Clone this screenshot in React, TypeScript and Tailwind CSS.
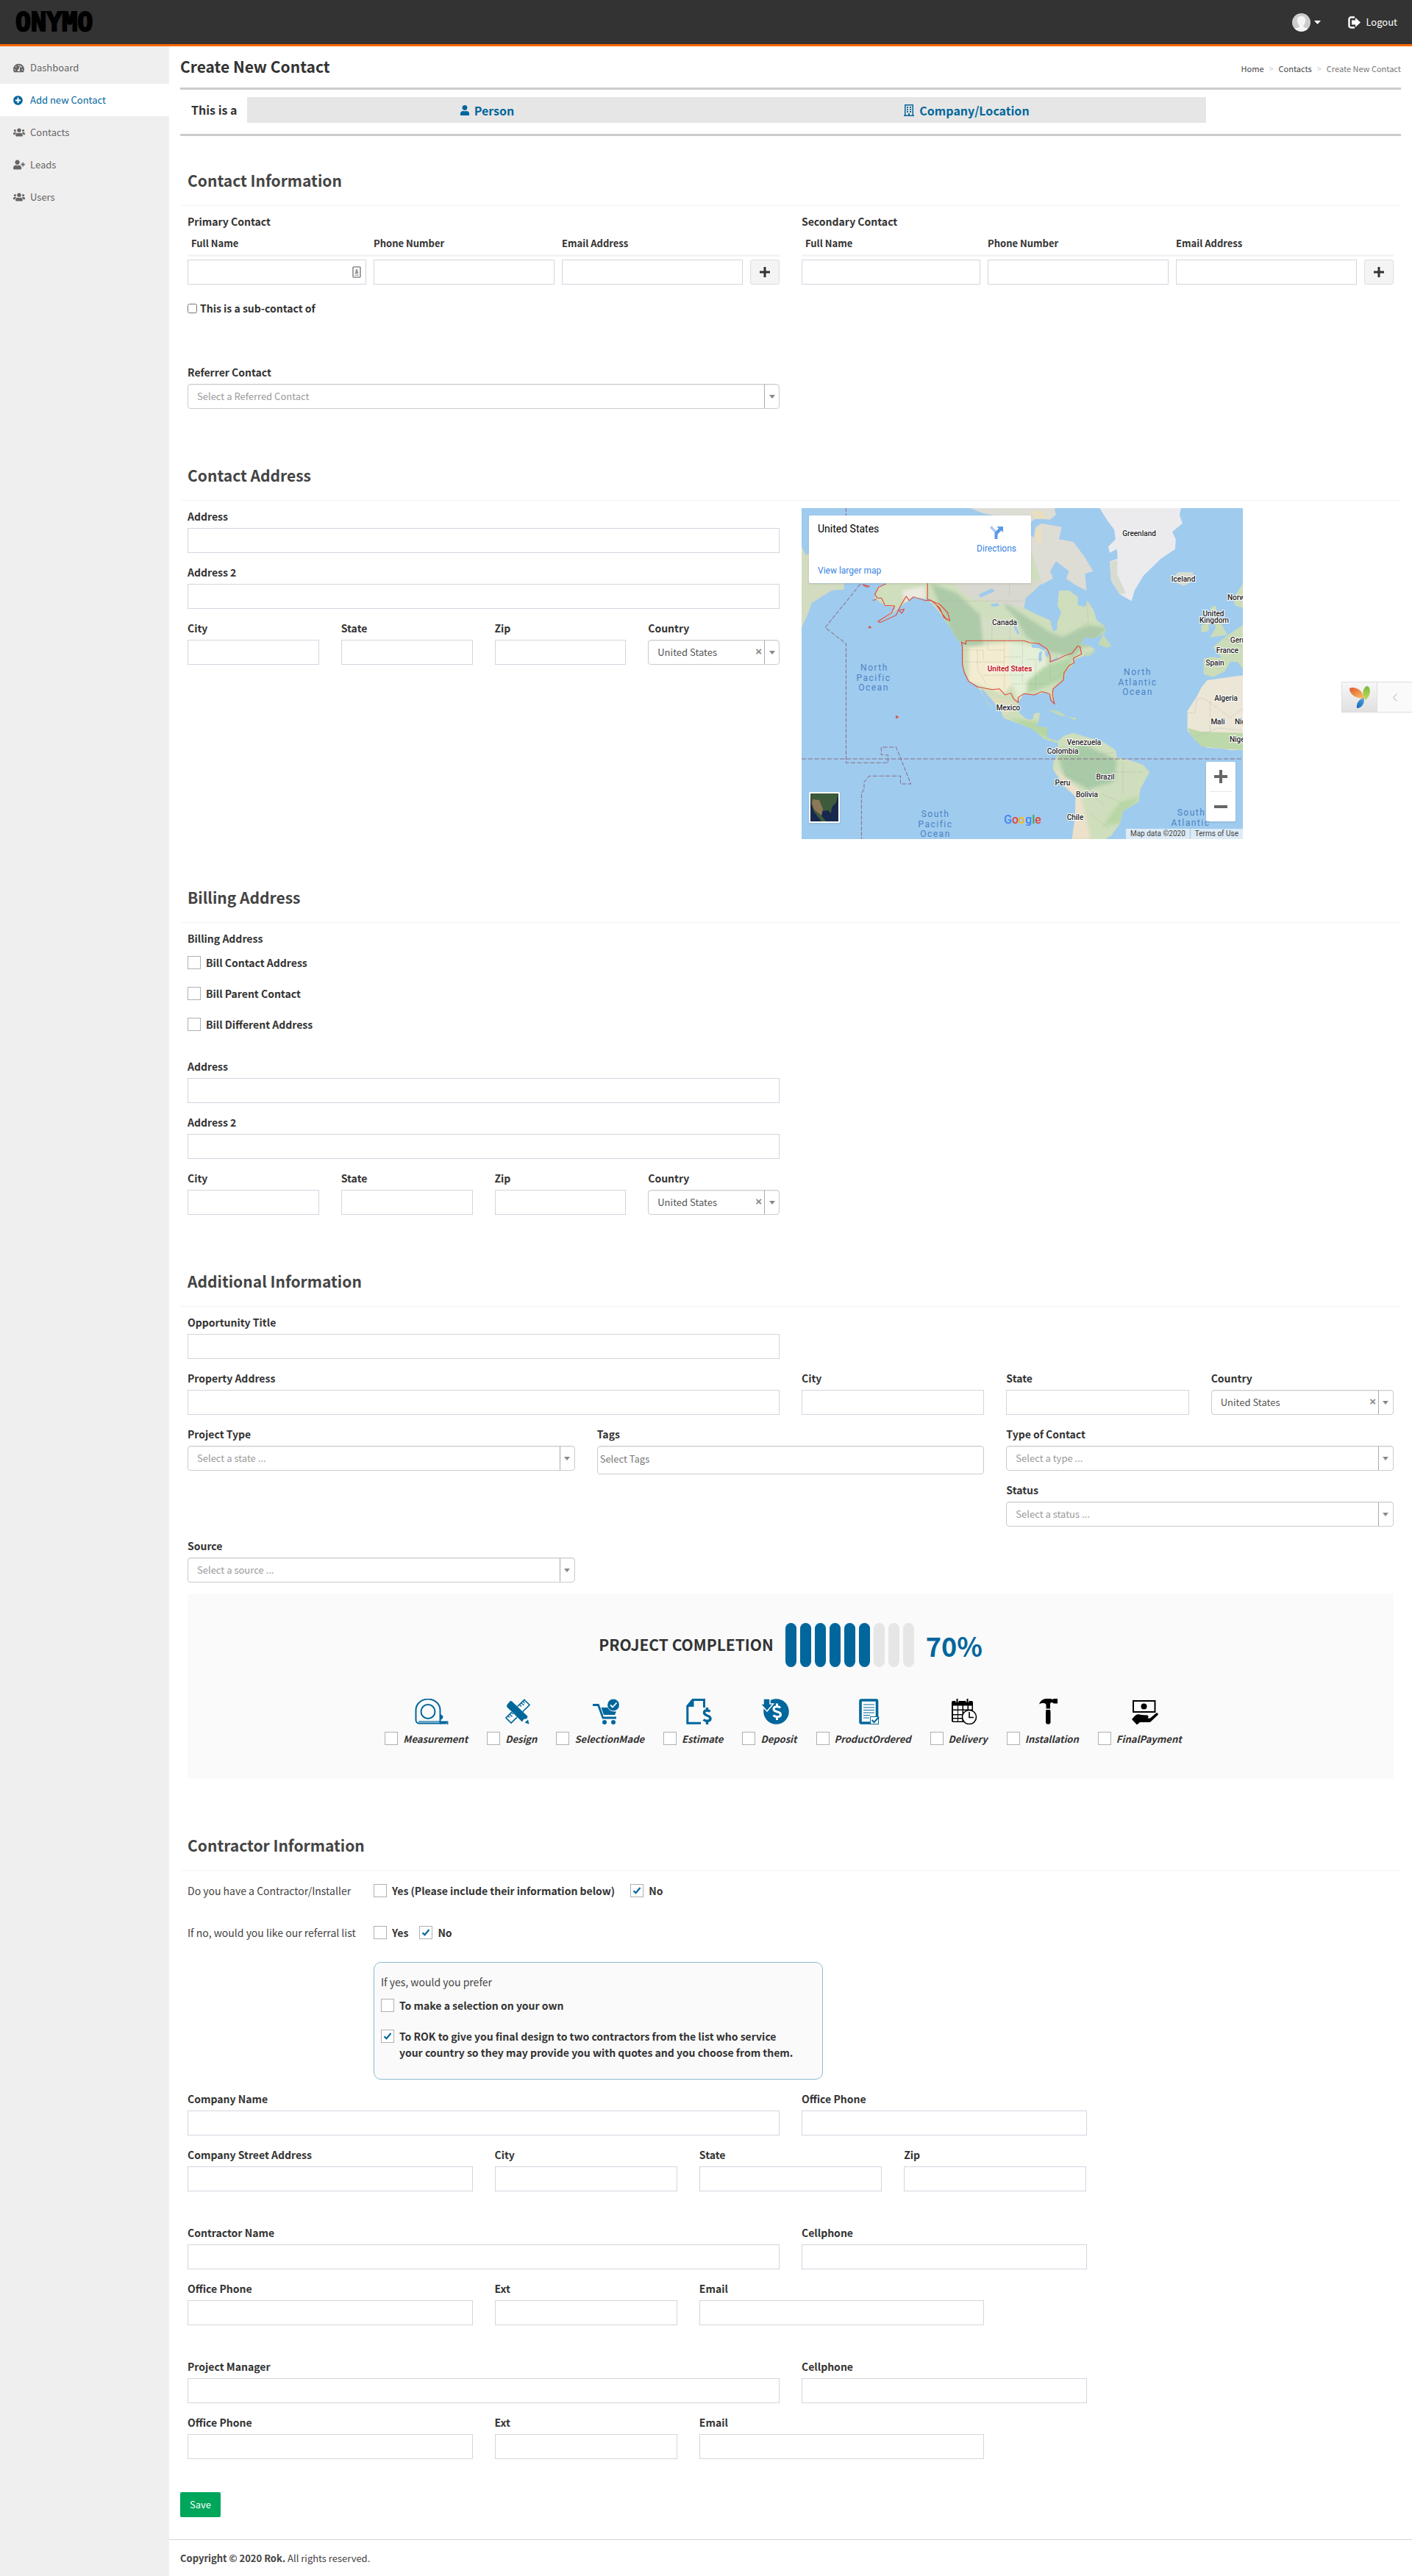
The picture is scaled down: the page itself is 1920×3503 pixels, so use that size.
import { useId, type ReactNode } from "react";
import { FaPlusCircle, FaRegBuilding, FaTachometerAlt, FaUser, FaUserPlus, FaUsers } from "react-icons/fa";

const labelClass = "block text-sm leading-[22px] font-bold text-[#333]";
const inputClass = "block h-[34px] w-full border border-[#d2d6de] bg-white px-3 text-[13px] text-[#555] outline-none";

function Row({ children, className = "" }: { children: ReactNode; className?: string }) {
  return <div className={`grid grid-cols-12 gap-x-[30px] ${className}`}>{children}</div>;
}

function Field({ label, className = "" }: { label: string; className?: string }) {
  const id = useId();
  return (
    <div className={`pb-[15px] ${className}`}>
      <label htmlFor={id} className={`${labelClass} mb-[5px]`}>{label}</label>
      <input id={id} type="text" className={inputClass} />
    </div>
  );
}

function SelectField({ label, value, filled = false, className = "" }: { label: string; value: string; filled?: boolean; className?: string }) {
  const id = useId();
  return (
    <div className={`pb-[15px] ${className}`}>
      <label htmlFor={id} className={`${labelClass} mb-[5px]`}>{label}</label>
      <div className="relative">
        <select
          id={id}
          className={`block h-[34px] w-full appearance-none rounded border border-[#ccc] bg-white pl-3 pr-10 text-[13px] leading-5 shadow-[inset_0_1px_1px_rgba(0,0,0,0.075)] outline-none ${filled ? "text-[#555]" : "text-[#999]"}`}
        >
          <option>{value}</option>
        </select>
        {filled && (
          <button type="button" aria-label={`Clear ${label}`} className="absolute right-[24px] top-[6px] font-['Liberation_Sans',sans-serif] text-[15px] leading-5 font-bold text-[#888]">×</button>
        )}
        <span className="pointer-events-none absolute inset-y-px right-px flex w-5 items-center justify-center border-l border-[#aaa]">
          <svg width="8" height="5" viewBox="0 0 8 5" fill="#888"><path d="M0 0h8L4 5z" /></svg>
        </span>
      </div>
    </div>
  );
}

function Check({ label, checked = false, className = "" }: { label: ReactNode; checked?: boolean; className?: string }) {
  return (
    <label className={`flex items-start gap-[7px] text-sm leading-[22px] font-bold text-[#333] ${className}`}>
      <span className="relative mt-[2px] block size-[18px] shrink-0">
        <input type="checkbox" defaultChecked={checked} className="peer block size-[18px] appearance-none border border-[#b0b0b0] bg-white" />
        <svg viewBox="0 0 18 18" className="pointer-events-none absolute inset-0 hidden size-[18px] peer-checked:block" fill="none" stroke="#00669c" strokeWidth="2.2">
          <path d="M4.5 9.2l3 3L13.5 5" />
        </svg>
      </span>
      <span>{label}</span>
    </label>
  );
}

function Section({ title, children, className = "" }: { title: string; children: ReactNode; className?: string }) {
  return (
    <section className={className}>
      <h2 className="flex h-[67px] items-center border-b border-[#f4f4f4] px-[10px] pb-[2px] text-[21px] font-bold text-[#444]">{title}</h2>
      <div className="px-[10px] pt-[10px] pb-[43px]">{children}</div>
    </section>
  );
}

const tableGrid = "grid grid-cols-[243fr_246fr_246fr_40px] gap-x-[10px]";

function ContactTable({ title, card = false }: { title: string; card?: boolean }) {
  const id = useId();
  const heads = ["Full Name", "Phone Number", "Email Address"];
  return (
    <fieldset className="col-span-6">
      <legend className={`${labelClass} mb-2`}>{title}</legend>
      <div className={`${tableGrid} border-b-[3px] border-[#f4f4f4]`}>
        {heads.map((h, i) => (
          <label key={h} htmlFor={`${id}-${i}`} className={`h-[26px] text-[13px] leading-[22px] font-bold text-[#333] ${i === 0 ? "pl-[5px]" : ""}`}>{h}</label>
        ))}
      </div>
      <div className={`mt-1 ${tableGrid}`}>
        {heads.map((h, i) => (
          <div key={h} className="relative">
            <input id={`${id}-${i}`} type="text" className={inputClass} />
            {card && i === 0 && (
              <svg className="absolute right-[7px] top-[9px]" width="12" height="16" viewBox="0 0 12 16" fill="none">
                <rect x="1" y="1" width="10" height="14" rx="1" fill="#fff" stroke="#8a8a8a" strokeWidth="1.6" />
                <circle cx="6" cy="5.4" r="1.3" fill="#8a8a8a" />
                <path d="M4 9c0-3 4-3 4 0zM3.4 10.5h5.2M3.4 12.4h5.2" fill="#8a8a8a" stroke="#8a8a8a" strokeWidth=".8" />
              </svg>
            )}
          </div>
        ))}
        <button type="button" aria-label={`Add ${title}`} className="flex h-[34px] items-center justify-center rounded-[3px] border border-[#ddd] bg-[#f4f4f4]">
          <svg width="14" height="14" viewBox="0 0 14 14" fill="#333"><path d="M5.5 0h3v5.5H14v3H8.500V14h-3V8.500H0v-3h5.500z" /></svg>
        </button>
      </div>
    </fieldset>
  );
}

const mapLabels: [string, number, number][] = [
  ["Greenland", 459, 38], ["Iceland", 519, 100], ["Canada", 276, 159], ["Mexico", 281, 275],
  ["Venezuela", 384, 322], ["Colombia", 355, 334], ["Brazil", 413, 369], ["Peru", 355, 377],
  ["Bolivia", 388, 393], ["Chile", 372, 424], ["Norway", 596, 125], ["United", 560, 147],
  ["Kingdom", 561, 156], ["Germany", 603, 183], ["France", 579, 197], ["Spain", 562, 214],
  ["Algeria", 577, 262], ["Mali", 566, 294], ["Niger", 601, 294], ["Nigeria", 598, 318],
];
const oceanLabels: [string, number, number][] = [
  ["North", 99, 221], ["Pacific", 98, 235], ["Ocean", 98, 248],
  ["North", 457, 227], ["Atlantic", 457, 241], ["Ocean", 457, 254],
  ["South", 182, 420], ["Pacific", 182, 434], ["Ocean", 182, 447],
  ["South", 530, 418], ["Atlantic", 529, 432], ["Ocean", 529, 445],
];

function MapDrawing() {
  return (
    <svg viewBox="0 0 600 450" className="absolute inset-0 size-full" fontFamily="Roboto, sans-serif" preserveAspectRatio="xMidYMid slice">
      <defs>
        <filter id="relief" x="-10%" y="-10%" width="120%" height="120%"><feGaussianBlur stdDeviation="6" /></filter>
        <clipPath id="land">
          <path d="M275 400L285 355 315 340 330 250 500 200 700 180 815 210 850 340 820 375 795 400 790 440 830 465 880 490 890 535 903 530 905 495 918 460 905 430 910 370 945 368 975 395 975 430 1000 435 1008 410 1030 450 1040 490 1068 515 1070 540 1030 565 1000 560 985 590 1010 590 1035 610 990 640 965 650 960 670 935 700 925 735 890 770 895 830 880 800 865 785 825 795 790 790 770 825 775 870 800 895 820 895 825 870 845 868 840 905 830 920 870 930 870 970 910 985 900 990 860 975 820 935 780 915 720 890 710 860 680 815 650 775 640 775 655 810 683 852 665 830 630 762 600 740 580 690 578 590 555 560 535 520 500 460 460 405 410 395 370 430 340 460 290 498 350 440 310 430 275 400Z" />
        </clipPath>
        <clipPath id="south">
          <path d="M905 985L930 960 960 950 1000 965 1060 985 1105 1020 1110 1050 1150 1060 1200 1080 1222 1110 1190 1180 1185 1230 1130 1270 1120 1320 1090 1370 1070 1383 955 1383 965 1300 968 1210 930 1170 890 1100 890 1070 910 1030Z" />
        </clipPath>
      </defs>
      <rect width="600" height="450" fill="#9fcbee" />
      <g transform="scale(.3953 .3333) translate(-25 -33)">
        <path fill="#d3dcc0" d="M25 190L40 225 52 215 50 340H172L170 365 130 368 100 390 60 420 45 470 25 520Z" />
        <path fill="#dddcd5" d="M605 33L650 55 815 90 830 75 880 80 900 60 895 33ZM830 110L850 95 920 110 910 160 960 170 1000 235 1028 290 1000 300 1005 370 965 345 935 320 945 290 900 250 880 290 890 320 850 345 820 320 815 200ZM760 90L870 200 830 240Z" />
        <path fill="#e9dfc0" d="M812 45L850 45 870 75 830 78ZM830 120L850 105 850 190 830 160Z" />
        <path fill="#ebebee" d="M1050 33H1330L1325 60 1335 95 1300 130 1312 160 1310 200 1260 240 1200 310 1170 370 1160 412 1120 385 1090 330 1085 250 1112 240 1110 200 1085 215 1080 190 1105 160 1100 120 1075 80Z" />
        <path fill="#d8dcd0" d="M1085 250L1112 245 1110 300 1140 380 1120 385 1090 330ZM1303 315L1320 295 1370 295 1378 325 1340 350 1310 335Z" />
        <g clipPath="url(#land)">
          <rect x="200" y="150" width="900" height="860" fill="#cfdebc" />
          <g filter="url(#relief)">
            <path fill="#adcba9" d="M470 340L560 380 640 470 650 600 560 590 500 430ZM700 400L790 470 880 540 1000 590 960 640 880 620 800 560 760 480ZM1010 510L1080 520 1010 600 900 570Z" />
            <path fill="#d9d8d0" d="M540 330L860 330 790 440 700 420 600 400Z" />
            <path fill="#d5dfc5" d="M640 480L760 490 780 560 650 570Z" />
            <path fill="#f3ecd0" d="M600 600L740 580 760 740 720 790 600 740Z" />
            <path fill="#e3efd6" d="M740 580L860 600 870 680 770 820 740 720Z" />
            <path fill="#b3d4a8" d="M860 680L960 640 930 730 800 790 800 740Z" />
            <path fill="#e1dcbc" d="M650 790L760 830 730 880Z" />
            <path fill="#eceae0" d="M370 370L450 350 450 410 380 420Z" />
            <path fill="#b5d5a2" d="M740 890L870 910 900 990 830 950Z" />
          </g>
        </g>
        <g clipPath="url(#south)">
          <rect x="880" y="940" width="360" height="450" fill="#cfdebc" />
          <g filter="url(#relief)">
            <path fill="#a9caa7" d="M900 1020L1000 1000 1110 1060 1100 1150 1010 1180 930 1130Z" />
            <path fill="#eee1cb" d="M890 1090L980 1180 1020 1383 950 1383 960 1220Z" />
            <path fill="#b9d7a6" d="M1120 1230L1190 1210 1120 1320 1060 1330Z" />
          </g>
        </g>
        <path fill="#9fcbee" d="M815 590L832 584 852 592 866 610 858 614 840 604 818 602ZM842 622L852 614 850 655 843 662 840 645ZM862 612L878 622 874 645 864 632ZM882 655L905 640 908 646 884 662ZM635 385L680 360 690 372 640 398ZM675 425L700 420 705 432 680 436ZM755 500L765 520 775 545 768 548 757 525Z" />
        <path fill="#c3d9b4" d="M1045 590L1062 545 1075 570 1092 595 1075 602ZM870 855L905 860 935 880 920 882ZM940 885L972 888 965 898ZM995 625L1038 615 1010 640Z" />
        <path fill="#ebe6d6" d="M1420 735L1460 728 1543 715V1020H1500L1480 1015 1420 1010 1380 980 1352 940V860L1385 800 1400 765Z" />
        <path fill="#bdd8a9" d="M1352 930L1400 945 1543 950V1020L1480 1015 1400 1005 1365 960Z" />
        <path fill="#cbdcb8" d="M1408 645L1440 640 1470 645 1440 600 1480 560 1543 510V690L1525 660 1500 660 1480 700 1440 722 1408 710ZM1430 440L1450 430 1455 470 1480 530 1490 550 1430 560 1450 520ZM1400 510L1425 500 1425 535 1400 540ZM1510 400L1543 340V440L1515 430Z" />
        <g fill="none" stroke="#a5a59b" strokeWidth="1.2" strokeDasharray="6 4">
          <path d="M500 412H790M680 480V574M742 500V574M740 340V400M585 612H650V650M585 661H720M630 612V690L660 750M665 574V612H722M722 574V770M722 640H780M722 680H800M650 715H790M785 574V740M750 750H880M800 650H860M830 660V780M880 660V740L930 700M1005 420L1012 500 960 540" />
          <path d="M920 1000L960 1060 930 1110M1010 1000L1040 1040 1100 1030M940 1120L1000 1150 1030 1210 1070 1250M1100 1110H1200M1130 1070V1200M1060 1200L1130 1240M1020 1280L1080 1340M1352 868H1378L1385 810H1410L1500 888 1543 850M1430 820V950M1380 965L1460 930 1540 940M1475 560L1543 600" />
        </g>
        <g fill="none" stroke="#8b6f86" strokeWidth="2.6" strokeDasharray="16 6">
          <path d="M178 33V63M227 343L106 520 178 586V1072H322V1040H299V1008H350L401 1158H365V1126H258L240 1150V1180L231 1195V1383M25 1056H1543" />
        </g>
        <g stroke="#e0483a" strokeWidth="3" strokeLinejoin="round">
          <path fill="none" d="M590 574H790L810 582 840 585 870 608 880 635V660L905 650 930 635 955 625 975 595 983 600 988 628 960 645 962 665 945 675 928 705 925 735 890 770 888 795 895 832 883 818 878 792 865 785 850 782 825 795 790 790 770 805V826L755 812 745 788 725 795 705 770 680 773 630 762 600 740 585 705 578 670V600L575 580 590 588Z" />
          <path fill="none" d="M315 342L290 355 277 385 285 400 300 400 312 430 345 432 335 460 288 495 295 500 350 470 368 425 385 392 395 410 410 395 450 410 470 408 500 440 515 480 535 492 528 460 500 425 458 405V340M235 345L258 352 250 356ZM360 450L378 445 370 462ZM350 880L358 886 351 890ZM258 515L264 520 256 522ZM270 410L282 405M487 425L510 465 525 490M495 420L520 450" />
        </g>
      </g>
      <g fontSize="10" fontWeight="500" textAnchor="middle" fill="#222" stroke="#fff" strokeWidth="2" paintOrder="stroke">
        {mapLabels.map(([t, x, y]) => <text key={t} x={x} y={y}>{t}</text>)}
        <text x="283" y="222" fill="#c5221f" fontWeight="700">United States</text>
      </g>
      <g fontSize="12" textAnchor="middle" fill="#4b82c4" letterSpacing="1.500">
        {oceanLabels.map(([t, x, y], i) => <text key={i} x={x} y={y}>{t}</text>)}
      </g>
    </svg>
  );
}

function MapPanel() {
  return (
    <div className="relative mb-1 h-[450px] w-full max-w-[600px] overflow-hidden font-['Roboto',sans-serif]">
      <MapDrawing />
      <div className="absolute left-[10px] top-[10px] flex h-[92px] w-[302px] justify-between rounded-[2px] bg-white px-3 py-2 shadow">
        <div className="flex flex-col justify-between">
          <p className="text-sm leading-5 text-black">United States</p>
          <a href="#map" className="text-xs leading-[18px] text-[#3a84df]">View larger map</a>
        </div>
        <a href="#directions" className="flex flex-col items-center gap-1 pt-[6px] pr-2 text-xs leading-[18px] text-[#3a84df]">
          <svg width="18" height="18" viewBox="0 0 18 18">
            <path d="M0 2.500L2.500 0 9 7.500 7 10z" fill="#a9cbf5" />
            <path d="M6.500 18v-7c0-1.500.5-2.500 1.500-3.500L12 3.500 9.500 1H18v8l-2.500-2.500-4 4c-.8.800-1 1.500-1 2.500v5z" fill="#5a9be8" />
          </svg>
          Directions
        </a>
      </div>
      <button type="button" aria-label="Show satellite imagery" className="absolute left-[10px] top-[386px] size-[42px] overflow-hidden rounded-[2px] border-2 border-white shadow">
        <svg viewBox="0 0 38 38" className="size-full">
          <rect width="38" height="38" fill="#17284e" />
          <path d="M0 0h38l-3 12-6 7-1 8-4-4-8 1-1 6 6 8h-6L5 25 1 14z" fill="#3d5a3b" />
          <path d="M3 8l9 1 5 12-2 9L5 22 2 14z" fill="#8d7757" />
        </svg>
      </button>
      <p aria-label="Google" className="absolute left-[275px] top-[413px] text-base leading-[22px] font-medium">
        <span className="text-[#4285f4]">G</span><span className="text-[#ea4335]">o</span><span className="text-[#fbbc05]">o</span><span className="text-[#4285f4]">g</span><span className="text-[#34a853]">l</span><span className="text-[#ea4335]">e</span>
      </p>
      <div className="absolute right-[10px] top-[345px] flex h-[81px] w-10 flex-col items-center rounded-[2px] bg-white shadow">
        <button type="button" aria-label="Zoom in" className="flex w-full flex-1 items-center justify-center">
          <svg width="18" height="18" fill="#666"><path d="M7 0h4v7h7v4h-7v7H7v-7H0V7h7z" /></svg>
        </button>
        <span className="h-px w-[30px] bg-[#e6e6e6]" />
        <button type="button" aria-label="Zoom out" className="flex w-full flex-1 items-center justify-center">
          <svg width="18" height="4" fill="#666"><path d="M0 0h18v4H0z" /></svg>
        </button>
      </div>
      <div className="absolute right-0 bottom-0 flex h-[14px] items-center gap-[6px] bg-[#e3eef6]/90 px-[6px] text-[10px] leading-[14px] text-[#444]">
        <span>Map data ©2020</span>
        <span className="h-full w-px bg-[#9fcbee]" />
        <a href="#terms">Terms of Use</a>
      </div>
    </div>
  );
}

const blue = "#00669c";
const steps: { label: string; icon: ReactNode }[] = [
  {
    label: "Measurement",
    icon: (
      <svg width="46" height="35" viewBox="0 0 46 35" fill="none" stroke={blue} strokeWidth="2">
        <path d="M1.500 29V16a16.500 15 0 0 1 33-1v18.500H6a4.500 4.500 0 0 1-4.500-4.500z" />
        <path d="M5 31h29" strokeWidth="1.200" />
        <circle cx="18" cy="17.500" r="9.500" />
        <path d="M35 22c4 0 4 6 0 6z" fill={blue} strokeWidth="1" />
        <path d="M34 31.500h10.500V35M34 33.500h9" strokeWidth="1.800" />
      </svg>
    ),
  },
  {
    label: "Design",
    icon: (
      <svg width="36" height="35" viewBox="0 0 36 35" fill={blue}>
        <path d="M27 1.500L34 8.500 9 33 2 26z" fill="#fafafa" stroke={blue} strokeWidth="1.700" />
        <path d="M23 6l3.500 3M25.500 4l2 2M21 8.500l2 2M7 21l3.500 3.500M5 23.500l2 2M10 19l2 2" stroke={blue} strokeWidth="1.400" />
        <path d="M9.500 2.500L33 26l-8 7L1.500 10z" fill="#fafafa" />
        <path d="M10 3.500L31.500 24l-1 3-4.500 1-2 3.500L3.500 11.500c-1-1-.5-3 1-4.500l2-2.500c1-1.500 2.500-2 3.500-1z" />
        <path d="M32 28.500l1.500 6-6-2z" />
      </svg>
    ),
  },
  {
    label: "SelectionMade",
    icon: (
      <svg width="36" height="35" viewBox="0 0 36 35" fill={blue}>
        <path d="M0 8.500h7.500L14 26h18" fill="none" stroke={blue} strokeWidth="2.800" />
        <path d="M11.500 12H21c1 4 4 5.500 11 5.500L30 22H15z" />
        <path d="M14 23.500h17" stroke="#fafafa" strokeWidth="1" />
        <circle cx="28" cy="8.500" r="8.200" stroke="#fafafa" strokeWidth=".6" />
        <path d="M24 8.500l3 3 5.500-6" fill="none" stroke="#fff" strokeWidth="1.800" />
        <circle cx="16" cy="32" r="3" /><circle cx="28" cy="32" r="3" />
      </svg>
    ),
  },
  {
    label: "Estimate",
    icon: (
      <svg width="35" height="35" viewBox="0 0 35 35" fill="none" stroke={blue}>
        <path d="M24.500 12V1.500H9L1.800 10v23.300H20" strokeWidth="3" />
        <path d="M1 10.500h9V1z" fill={blue} />
        <path d="M32.500 17.500c-2-2-8-2.500-8 1.500 0 5 8.500 3 8.500 8 0 4-6.500 4-9.500 1.500M28.500 12v3.500M28.500 30.500V35" strokeWidth="3.400" />
      </svg>
    ),
  },
  {
    label: "Deposit",
    icon: (
      <svg width="38" height="35" viewBox="0 0 38 35">
        <circle cx="20.500" cy="17.500" r="17.300" fill={blue} />
        <path d="M3 0h9v7h4.500L8 17-1 7h4z" fill={blue} stroke="#fafafa" strokeWidth="1.500" />
        <path d="M26 12.500c-2-2.500-9-2.500-9 1.500 0 5 9.500 2.500 9.500 7.500 0 4-7 4-10 1M21.500 6.500v4M21.500 25v4" fill="none" stroke="#fff" strokeWidth="3" />
      </svg>
    ),
  },
  {
    label: "ProductOrdered",
    icon: (
      <svg width="28" height="35" viewBox="0 0 28 35" fill="none" stroke={blue}>
        <rect x="2" y="2" width="22.500" height="31" rx="1" fill="#fff" strokeWidth="3.600" />
        <path d="M6 8h15M6 12h15M6 15.500h15M6 19h15M6 22.500h9M6 26h8" strokeWidth="1.200" />
        <rect x="15.500" y="24.500" width="11" height="10" fill="#fff" strokeWidth="1" />
        <path d="M17.500 29l3 3L27 25" strokeWidth="2" />
      </svg>
    ),
  },
  {
    label: "Delivery",
    icon: (
      <svg width="36" height="35" viewBox="0 0 36 35">
        <rect x="1" y="3" width="29" height="29" rx="2" fill="#000" />
        <path d="M3 9.500h6v5H3zM10 9.500h5.500v5H10zM17 9.500h5.500v5H17zM24 9.500h4.500v5H24zM3 16h6v5H3zM10 16h5.500v5H10zM17 16h5.500v5H17zM3 22.500h6v3.500H3zM10 22.500h5.500v3.500H10zM3 27.500h6v3H3zM10 27.500h5.500v3H10z" fill="#fff" />
        <path d="M8.500 0v5M22.500 0v5" stroke="#fafafa" strokeWidth="4" />
        <path d="M8.500 0v5M22.500 0v5" stroke="#000" strokeWidth="2" />
        <circle cx="25" cy="25" r="9.500" fill="#fff" stroke="#000" strokeWidth="1.600" />
        <path d="M25 18v7.500h6" fill="none" stroke="#000" strokeWidth="1.600" />
      </svg>
    ),
  },
  {
    label: "Installation",
    icon: (
      <svg width="25" height="35" viewBox="0 0 25 35" fill="#000">
        <path d="M0 7.500C2 2 6 0 10 0h6l2 1 2-1h5v6.500h-5L17.500 5c-2 .3-2.500 1-2.500 3v5.500H9.500V8C8 5.500 4 5.500 0 7.500z" />
        <path d="M9.500 15h5.500l.500 3v14c0 3.500-6.500 3.500-6.500 0V18z" />
      </svg>
    ),
  },
  {
    label: "FinalPayment",
    icon: (
      <svg width="36" height="35" viewBox="0 0 36 35" fill="#000">
        <rect x="2" y="3" width="29.500" height="15" fill="none" stroke="#000" strokeWidth="2" />
        <circle cx="16.500" cy="10.500" r="4" />
        <path d="M0 28l4-4.500c3-3 6-2.500 9-1.500l8 .5c2 .5 2 3.500 0 4h4l7.500-6.500c2-1 4 0 3 2L26 31c-1 1-2 1-3 1H11l-4 3.500z" />
      </svg>
    ),
  },
];

const nav = [
  { label: "Dashboard", icon: FaTachometerAlt, size: 15 },
  { label: "Add new Contact", icon: FaPlusCircle, size: 13, active: true },
  { label: "Contacts", icon: FaUsers, size: 16 },
  { label: "Leads", icon: FaUserPlus, size: 16 },
  { label: "Users", icon: FaUsers, size: 16 },
];

function AddressFields() {
  return (
    <>
      <Field label="Address" />
      <Field label="Address 2" />
      <div className="grid grid-cols-4 gap-x-[30px]">
        <Field label="City" />
        <Field label="State" />
        <Field label="Zip" />
        <SelectField label="Country" value="United States" filled />
      </div>
    </>
  );
}

export default function App() {
  const tagsId = useId();
  return (
    <div className="relative flex min-h-screen flex-col bg-white font-['Noto_Sans_CJK_SC','Noto_Sans_CJK_TC',sans-serif] text-sm leading-[22px] text-[#333]">
      <header className="flex h-[63px] items-center justify-between border-b-[3px] border-[#ff6600] bg-[#333] pr-5 pl-[21px]">
        <a href="#home" className="block font-['DejaVu_Sans_Mono',monospace] text-[35px] leading-[44px] font-bold whitespace-nowrap text-black [-webkit-text-stroke:2px_#000]">ONYMO</a>
        <div className="flex items-center">
          <button type="button" aria-label="Account" className="flex items-center gap-[5px]">
            <svg width="25" height="25" viewBox="0 0 25 25">
              <circle cx="12.500" cy="12.500" r="12.500" fill="#ccc" />
              <path d="M12.500 4c4 0 6 2.500 5.600 6.500-.3 3-1.600 5-2.600 6v2.500c1.500 1 4.500.800 6 2a12.500 12.500 0 0 1-18 0c1.500-1.200 4.500-1 6-2v-2.500c-1-1-2.300-3-2.600-6C6.500 6.500 8.500 4 12.500 4z" fill="#f4f4f4" />
            </svg>
            <svg width="9" height="5" viewBox="0 0 9 5" fill="#fff"><path d="M0 0h9L4.500 5z" /></svg>
          </button>
          <a href="#logout" className="ml-[37px] flex items-center gap-[7px] text-[13px] leading-5 text-white">
            <svg width="17" height="17" viewBox="0 0 17 17" fill="none" stroke="#fff">
              <path d="M9 1.500H4a2.500 2.500 0 0 0-2.500 2.500v9A2.500 2.500 0 0 0 4 15.500h5" strokeWidth="2.400" />
              <path d="M5 5.500h5V2l7 6.500L10 15v-3.500H5z" fill="#fff" stroke="none" />
            </svg>
            Logout
          </a>
        </div>
      </header>

      <div className="flex flex-1">
        <aside className="w-[230px] shrink-0 bg-[#efefef] pt-[7px]">
          <nav>
            {nav.map(({ label, icon: Icon, size, active }) => (
              <a key={label} href={`#${label}`} className={`flex h-11 items-center pl-[18px] text-[13px] ${active ? "bg-white text-[#00669c]" : "text-[#666]"}`}>
                <span className="w-[23px]"><Icon size={size} /></span>
                {label}
              </a>
            ))}
          </nav>
        </aside>

        <main className="flex min-w-0 flex-1 flex-col">
          <div className="px-[15px]">
            <div className="flex h-14 items-center justify-between">
              <h1 className="pb-[2px] text-[21px] font-bold text-[#333]">Create New Contact</h1>
              <nav aria-label="Breadcrumb" className="flex gap-[7px] pt-1 text-[11px]">
                <a href="#home" className="text-[#444]">Home</a>
                <span className="text-[#ccc]">&gt;</span>
                <a href="#contacts" className="text-[#444]">Contacts</a>
                <span className="text-[#ccc]">&gt;</span>
                <span className="text-[#777]">Create New Contact</span>
              </nav>
            </div>

            <div className="flex border-y-[3px] border-[#ccc] pt-[10px] pb-[15px] pl-[15px]">
              <span className="w-[76px] text-base leading-[34px] font-bold">This is a</span>
              <div className="mr-[265px] grid h-[35px] flex-1 grid-cols-2 bg-[#e6e6e6] text-base font-bold text-[#00669c]">
                <button type="button" className="flex items-center justify-center gap-[6px]"><FaUser size={14} />Person</button>
                <button type="button" className="flex items-center justify-center gap-[6px]"><FaRegBuilding size={16} />Company/Location</button>
              </div>
            </div>

            <form className="pt-7">
              <Section title="Contact Information">
                <Row>
                  <ContactTable title="Primary Contact" card />
                  <ContactTable title="Secondary Contact" />
                </Row>
                <label className="mt-[21px] flex items-center gap-1 font-bold">
                  <input type="checkbox" className="size-[13px]" />
                  This is a sub-contact of
                </label>
                <Row className="mt-[65px]">
                  <SelectField label="Referrer Contact" value="Select a Referred Contact" className="col-span-6" />
                </Row>
              </Section>

              <Section title="Contact Address">
                <Row>
                  <div className="col-span-6"><AddressFields /></div>
                  <div className="col-span-6"><MapPanel /></div>
                </Row>
              </Section>

              <Section title="Billing Address">
                <fieldset>
                  <legend className={labelClass}>Billing Address</legend>
                  <div className="mt-[11px] mb-[35px] flex flex-col items-start gap-5">
                    <Check label="Bill Contact Address" />
                    <Check label="Bill Parent Contact" />
                    <Check label="Bill Different Address" />
                  </div>
                </fieldset>
                <Row>
                  <div className="col-span-6"><AddressFields /></div>
                </Row>
              </Section>

              <Section title="Additional Information">
                <Row>
                  <Field label="Opportunity Title" className="col-span-6" />
                </Row>
                <Row>
                  <Field label="Property Address" className="col-span-6" />
                  <Field label="City" className="col-span-2" />
                  <Field label="State" className="col-span-2" />
                  <SelectField label="Country" value="United States" filled className="col-span-2" />
                </Row>
                <Row>
                  <SelectField label="Project Type" value="Select a state ..." className="col-span-4" />
                  <div className="col-span-4">
                    <label htmlFor={tagsId} className={`${labelClass} mb-[5px]`}>Tags</label>
                    <input id={tagsId} type="text" placeholder="Select Tags" className="block h-[39px] w-full rounded border border-[#ccc] bg-white px-[3px] pb-[5px] text-[13px] shadow-[inset_0_1px_1px_rgba(0,0,0,0.075)] placeholder:text-[#777]" />
                  </div>
                  <div className="col-span-4">
                    <SelectField label="Type of Contact" value="Select a type ..." />
                    <SelectField label="Status" value="Select a status ..." />
                  </div>
                </Row>
                <Row>
                  <SelectField label="Source" value="Select a source ..." className="col-span-4" />
                </Row>

                <div className="mb-[15px] bg-[#fafafa] pt-10 pb-[43px]">
                  <div className="flex items-center justify-center">
                    <span className="pb-[2px] text-[21px] font-bold">PROJECT COMPLETION</span>
                    <div role="img" aria-label="Six of nine steps done" className="ml-4 flex gap-[5px]">
                      {[1, 1, 1, 1, 1, 1, 0, 0, 0].map((on, i) => (
                        <span key={i} className={`h-[60px] w-[15px] rounded-full ${on ? "bg-[#00669c]" : "bg-[#e6e6e6]"}`} />
                      ))}
                    </div>
                    <span className="ml-4 text-4xl font-bold text-[#00669c]">70%</span>
                  </div>
                  <div className="mt-[43px] flex justify-center gap-[26px] pr-5">
                    {steps.map(({ label, icon }) => (
                      <div key={label} className="flex flex-col items-center">
                        <div className="mb-2 pl-[15px]">{icon}</div>
                        <Check label={<em className="text-[13px]">{label}</em>} />
                      </div>
                    ))}
                  </div>
                </div>
              </Section>

              <Section title="Contractor Information">
                <div className="flex pt-[6px]">
                  <span className="w-[253px] text-[#444]">Do you have a Contractor/Installer</span>
                  <Check label="Yes (Please include their information below)" className="mr-[21px]" />
                  <Check label="No" checked />
                </div>
                <div className="flex pt-[35px]">
                  <span className="w-[253px] text-[#444]">If no, would you like our referral list</span>
                  <Check label="Yes" className="mr-[15px]" />
                  <Check label="No" checked />
                </div>
                <fieldset className="mt-[29px] mb-[15px] ml-[253px] w-[611px] rounded-[10px] border border-[#8abcd1] bg-[#fafafa] px-[9px] pt-[15px] pb-[25px]">
                  <p className="mb-[10px] text-[#444]">If yes, would you prefer</p>
                  <Check label="To make a selection on your own" className="mb-5" />
                  <Check checked label={<>To ROK to give you final design to two contractors from the list who service<br />your country so they may provide you with quotes and you choose from them.</>} />
                </fieldset>
                <Row>
                  <Field label="Company Name" className="col-span-6" />
                  <Field label="Office Phone" className="col-span-3" />
                </Row>
                <Row>
                  <Field label="Company Street Address" className="col-span-3" />
                  <Field label="City" className="col-span-2" />
                  <Field label="State" className="col-span-2" />
                  <Field label="Zip" className="col-span-2" />
                </Row>
                {["Contractor Name", "Project Manager"].map((name) => (
                  <div key={name} className="mt-[30px]">
                    <Row>
                      <Field label={name} className="col-span-6" />
                      <Field label="Cellphone" className="col-span-3" />
                    </Row>
                    <Row>
                      <Field label="Office Phone" className="col-span-3" />
                      <Field label="Ext" className="col-span-2" />
                      <Field label="Email" className="col-span-3" />
                    </Row>
                  </div>
                ))}
              </Section>
              <button type="button" className="-mt-[13px] mb-[30px] block h-[34px] rounded-[2px] bg-[#00a65a] px-[13px] text-[13px] leading-5 text-white">Save</button>
            </form>
          </div>
          <footer className="mt-auto border-t border-[#d2d6de] px-[15px] py-[14px] text-[13px] text-[#444]">
            <strong>Copyright © 2020 Rok.</strong> All rights reserved.
          </footer>
        </main>
      </div>

      <div className="absolute top-[927px] right-0 flex h-[42px] w-24 border border-r-0 border-[#ddd]">
        <a href="#debug" aria-label="Debug toolbar" className="flex w-[47px] items-center justify-center bg-linear-to-b from-[#f7f7f7] to-[#e0e0e0]">
          <svg width="28" height="30" viewBox="0 0 28 30">
            <defs>
              <linearGradient id="leafA" x1="0" y1="0" x2="1" y2="1"><stop stopColor="#e2562f" /><stop offset="1" stopColor="#f9c667" /></linearGradient>
              <linearGradient id="leafB" x1="0" y1="0" x2="0" y2="1"><stop stopColor="#7cb93c" /><stop offset="1" stopColor="#c5dc5a" /></linearGradient>
              <linearGradient id="leafC" x1="1" y1="0" x2="0" y2="1"><stop stopColor="#5fa5dc" /><stop offset="1" stopColor="#0d66b8" /></linearGradient>
            </defs>
            <path d="M0 3c6-3 18 1 20 14C10 17 0 12 0 3z" fill="url(#leafA)" />
            <path d="M22 19c-5-6-5-15 1-19 7 0 6 13-1 19z" fill="url(#leafB)" />
            <path d="M10 30c-1-7 3-12 9-14 3 6-2 14-9 14z" fill="url(#leafC)" />
          </svg>
        </a>
        <button type="button" aria-label="Collapse toolbar" className="flex flex-1 items-center justify-center border-l border-[#ddd] bg-[#fafafa]">
          <svg width="6" height="11" viewBox="0 0 6 11" fill="none" stroke="#aaa"><path d="M5.500.5l-5 5 5 5" /></svg>
        </button>
      </div>
    </div>
  );
}
